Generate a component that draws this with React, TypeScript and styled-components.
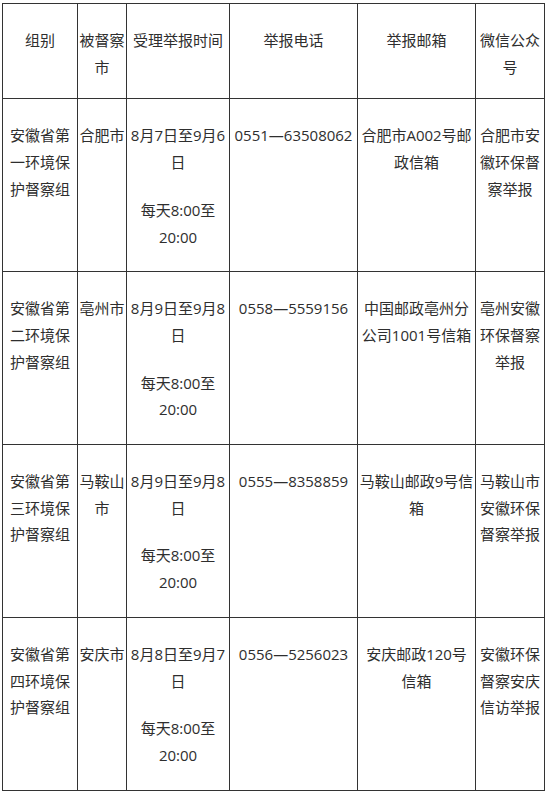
import React from 'react'
import styled, { createGlobalStyle } from 'styled-components'

interface Row {
	group: string[]
	city: string[]
	time: string[][]
	phone: string[]
	mail: string[]
	wechat: string[]
}

const header: string[][] = [
	['组别'],
	['被督察', '市'],
	['受理举报时间'],
	['举报电话'],
	['举报邮箱'],
	['微信公众', '号'],
]

const rows: Row[] = [
	{
		group: ['安徽省第', '一环境保', '护督察组'],
		city: ['合肥市'],
		time: [['8月7日至9月6', '日'], ['每天8:00至', '20:00']],
		phone: ['0551—63508062'],
		mail: ['合肥市A002号邮', '政信箱'],
		wechat: ['合肥市安', '徽环保督', '察举报'],
	},
	{
		group: ['安徽省第', '二环境保', '护督察组'],
		city: ['亳州市'],
		time: [['8月9日至9月8', '日'], ['每天8:00至', '20:00']],
		phone: ['0558—5559156'],
		mail: ['中国邮政亳州分', '公司1001号信箱'],
		wechat: ['亳州安徽', '环保督察', '举报'],
	},
	{
		group: ['安徽省第', '三环境保', '护督察组'],
		city: ['马鞍山', '市'],
		time: [['8月9日至9月8', '日'], ['每天8:00至', '20:00']],
		phone: ['0555—8358859'],
		mail: ['马鞍山邮政9号信', '箱'],
		wechat: ['马鞍山市', '安徽环保', '督察举报'],
	},
	{
		group: ['安徽省第', '四环境保', '护督察组'],
		city: ['安庆市'],
		time: [['8月8日至9月7', '日'], ['每天8:00至', '20:00']],
		phone: ['0556—5256023'],
		mail: ['安庆邮政120号', '信箱'],
		wechat: ['安徽环保', '督察安庆', '信访举报'],
	},
]

const colWidths = [75, 49, 103, 128, 118, 69]

const Lines: React.FC<{ lines: string[] }> = ({ lines }) => (
	<Para>
		{lines.map((l, i) => (
			<Line key={i}>{l}</Line>
		))}
	</Para>
)

const App: React.FC = () => {
	return (
		<>
			<GlobalStyle />
			<Page>
				<Table>
					<colgroup>
						{colWidths.map((w, i) => (
							<col key={i} style={{ width: w }} />
						))}
					</colgroup>
					<tbody>
						<tr>
							{header.map((h, i) => (
								<HeadCell key={i}>
									<Lines lines={h} />
								</HeadCell>
							))}
						</tr>
						{rows.map((r, i) => (
							<tr key={i}>
								<Cell><Lines lines={r.group} /></Cell>
								<Cell><Lines lines={r.city} /></Cell>
								<Cell>
									{r.time.map((t, j) => (
										<Lines key={j} lines={t} />
									))}
								</Cell>
								<Cell><Lines lines={r.phone} /></Cell>
								<Cell><Lines lines={r.mail} /></Cell>
								<Cell><Lines lines={r.wechat} /></Cell>
							</tr>
						))}
					</tbody>
				</Table>
			</Page>
		</>
	)
}

const GlobalStyle = createGlobalStyle`
	body {
		margin: 0;
		background: #fff;
		font-family: "Open Sans", "Noto Sans CJK SC", sans-serif;
	}
`

const Page = styled.div`
	padding: 3px 0 0 2px;
`

const Table = styled.table`
	width: 542px;
	table-layout: fixed;
	border-collapse: collapse;
	color: #2e2e2e;
	font-size: 15px;
	line-height: 26.7px;
`

const Cell = styled.td`
	border: 1px solid #333;
	vertical-align: top;
	text-align: center;
	padding: 23px 0 21px;
	height: 128px;
	box-sizing: border-box;
`

const HeadCell = styled(Cell)`
	padding-bottom: 18px;
	height: auto;
`

const Para = styled.div`
	& + & {
		margin-top: 21px;
	}
`

const Line = styled.span`
	display: block;
	white-space: nowrap;
`

export default App
